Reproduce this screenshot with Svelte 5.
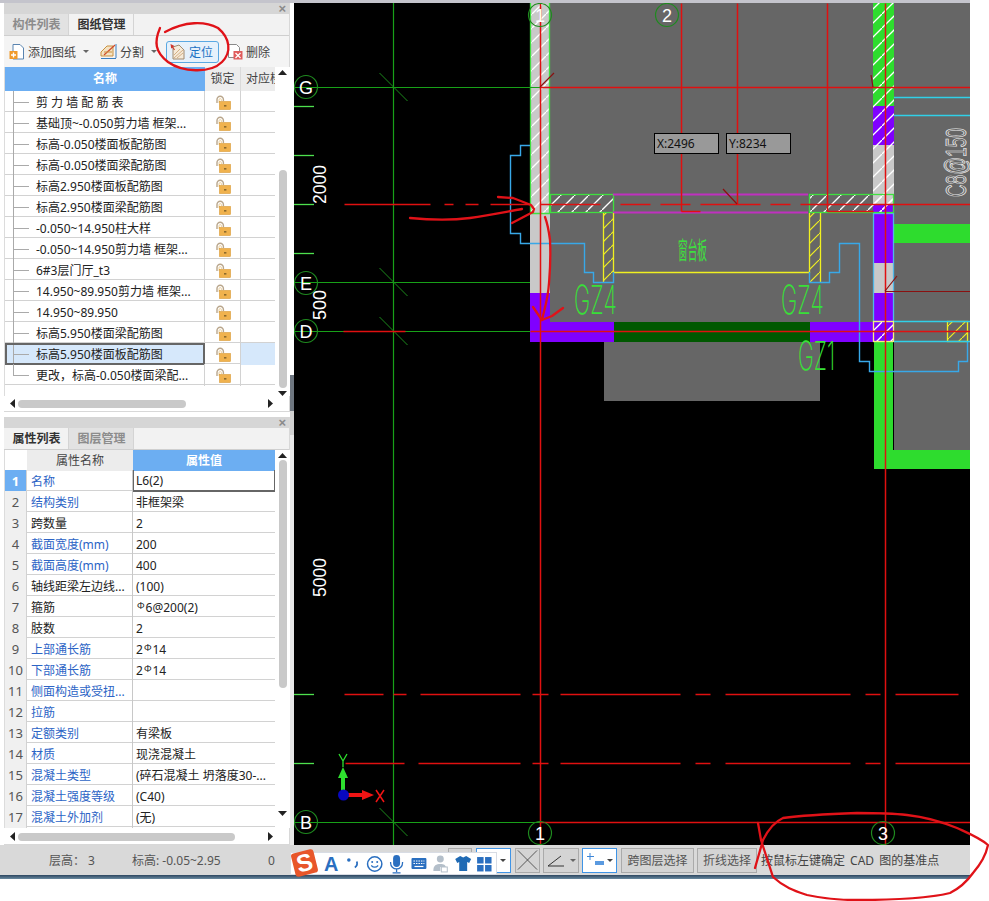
<script lang="ts">
  const drawings = [
    "剪 力 墙 配 筋 表",
    "基础顶~-0.050剪力墙 框架...",
    "标高-0.050楼面板配筋图",
    "标高-0.050楼面梁配筋图",
    "标高2.950楼面板配筋图",
    "标高2.950楼面梁配筋图",
    "-0.050~14.950柱大样",
    "-0.050~14.950剪力墙 框架...",
    "6#3层门厅_t3",
    "14.950~89.950剪力墙 框架...",
    "14.950~89.950",
    "标高5.950楼面梁配筋图",
    "标高5.950楼面板配筋图",
    "更改，标高-0.050楼面梁配...",
  ];
  const selectedDrawing = 12;

  // link = blue label, bar = rebar symbol goes between pre and post
  const props = [
    { name: "名称", value: "L6(2)", link: true },
    { name: "结构类别", value: "非框架梁", link: true },
    { name: "跨数量", value: "2" },
    { name: "截面宽度(mm)", value: "200", link: true },
    { name: "截面高度(mm)", value: "400", link: true },
    { name: "轴线距梁左边线...", value: "(100)" },
    { name: "箍筋", pre: "", post: "6@200(2)" },
    { name: "肢数", value: "2" },
    { name: "上部通长筋", pre: "2", post: "14", link: true },
    { name: "下部通长筋", pre: "2", post: "14", link: true },
    { name: "侧面构造或受扭...", value: "", link: true },
    { name: "拉筋", value: "", link: true },
    { name: "定额类别", value: "有梁板", link: true },
    { name: "材质", value: "现浇混凝土", link: true },
    { name: "混凝土类型", value: "(碎石混凝土 坍落度30-...", link: true },
    { name: "混凝土强度等级", value: "(C40)", link: true },
    { name: "混凝土外加剂", value: "(无)", link: true },
  ];

  const axes = [
    { t: "1", x: 540, y: 15 },
    { t: "2", x: 667, y: 15 },
    { t: "G", x: 306, y: 87 },
    { t: "E", x: 306, y: 283 },
    { t: "D", x: 306, y: 331 },
    { t: "B", x: 306, y: 822 },
    { t: "1", x: 540, y: 833 },
    { t: "3", x: 883, y: 833 },
  ];

  const crosses = [87, 282, 331, 822];
  const ticks = [106, 155, 204, 253, 694, 763];

  // red centre lines: [x1, y1, x2, y2]
  const redLines = [
    [540, 3, 540, 845],
    [885, 3, 885, 845],
    [681, 3, 681, 211],
    [737, 3, 737, 204],
    [827, 3, 827, 211],
    [540, 87, 970, 87],
    [681, 211, 700, 211],
    [827, 211, 873, 211],
    [344, 204, 430, 204],
    [444, 204, 453, 204],
    [465, 204, 478, 204],
    [490, 204, 530, 204],
    [540, 204, 600, 204],
    [620, 204, 650, 204],
    [660, 204, 690, 204],
    [700, 204, 760, 204],
    [770, 204, 790, 204],
    [800, 204, 970, 204],
    [343, 331, 405, 331],
    [530, 331, 970, 331],
    [344, 694, 383, 694],
    [393, 694, 406, 694],
    [420, 694, 520, 694],
    [532, 694, 548, 694],
    [560, 694, 680, 694],
    [695, 694, 710, 694],
    [725, 694, 850, 694],
    [865, 694, 880, 694],
    [895, 694, 958, 694],
    [345, 763, 404, 763],
    [418, 763, 520, 763],
    [532, 763, 548, 763],
    [560, 763, 680, 763],
    [695, 763, 710, 763],
    [725, 763, 850, 763],
    [865, 763, 880, 763],
    [895, 763, 970, 763],
    [540, 822, 970, 822],
  ];
</script>

{#snippet lock()}
  <svg class="lock" width="16" height="15" viewBox="0 0 16 15">
    <path d="M2 8V4.5a3.2 3.2 0 0 1 6.4 0V6" fill="none" stroke="#b9a68c" stroke-width="1.4" />
    <path d="M4 8V4.8a1.2 1.2 0 0 1 2.4 0V6" fill="none" stroke="#e8c78c" stroke-width="0.8" />
    <rect x="4.5" y="6.5" width="11" height="8" fill="#f0b24e" stroke="#d99a35" stroke-width="0.6" />
    <rect x="9" y="10" width="2.4" height="1.6" fill="#8c6a2c" />
  </svg>
{/snippet}

{#snippet rebar()}<span class="rebar">Φ</span>{/snippet}

{#snippet upArrow()}<svg width="9" height="5" viewBox="0 0 9 5"><path d="M4.5 0L9 5H0z" fill="#222" /></svg>{/snippet}
{#snippet downArrow()}<svg width="9" height="5" viewBox="0 0 9 5"><path d="M4.5 5L9 0H0z" fill="#222" /></svg>{/snippet}
{#snippet leftArrow()}<svg width="5" height="9" viewBox="0 0 5 9"><path d="M0 4.5L5 0V9z" fill="#222" /></svg>{/snippet}
{#snippet rightArrow()}<svg width="5" height="9" viewBox="0 0 5 9"><path d="M5 4.5L0 0V9z" fill="#222" /></svg>{/snippet}

<div class="page">
  <div class="topline"></div>
  <div class="main">
    <div class="side">
      <section class="panel first">
        <div class="panel-head"><span class="close">×</span></div>
        <div class="tabs">
          <span class="tab off">构件列表</span>
          <span class="tab on">图纸管理</span>
        </div>
        <div class="toolbar">
          <svg class="ti" style="margin-left:5px" width="16" height="18" viewBox="0 0 16 18">
            <path d="M4 1.5h7l3.5 3.5v11H4z" fill="#fff" stroke="#5a84b0" />
            <rect x="0.5" y="8" width="8" height="8" fill="#f09a2a" />
            <path d="M4.5 9.5v5M2 12h5" stroke="#fff" stroke-width="1.4" />
          </svg>
          <span class="tl" style="margin-left:3px">添加图纸</span>
          <span class="caret" style="margin-left:7px"></span>
          <svg class="ti" style="margin-left:11px" width="17" height="17" viewBox="0 0 17 17">
            <path d="M1 9l6-6h6v10H1z" fill="#f4e3c4" stroke="#c99140" />
            <path d="M1 15.5h15M16 1v14" stroke="#3b7fc0" />
            <path d="M4 12L15 2" stroke="#d04a2a" stroke-width="1.2" />
            <path d="M4 9h8" stroke="#c99140" />
          </svg>
          <span class="tl" style="margin-left:3px">分割</span>
          <span class="caret" style="margin-left:7px"></span>
          <span class="locate">
            <svg width="16" height="17" viewBox="0 0 16 17">
              <path d="M3 4l6-2 5 5v9H3z" fill="#f6ead8" stroke="#a08a70" />
              <path d="M4 15l9-8M7 15l6-5M4 12l6-6" stroke="#c9a070" stroke-width="0.8" />
              <path d="M0.5 1l4 2-1.5 1 2 2.5-1 .7L2.500 4.700 1.200 5.500z" fill="#d0352a" />
            </svg>
            定位
          </span>
          <svg class="ti" style="margin-left:8px" width="16" height="17" viewBox="0 0 16 17">
            <path d="M1.500 1.500h8l3 3v10h-11z" fill="#fff" stroke="#8a8a8a" />
            <rect x="6.500" y="8" width="9" height="8.500" fill="#e05c5c" />
            <path d="M8.500 10l5 5M13.500 10l-5 5" stroke="#fff" stroke-width="1.3" />
          </svg>
          <span class="tl" style="margin-left:3px">删除</span>
        </div>
        <div class="body first-body">
          <div class="grid-wrap">
            <div class="row1 head1">
              <span class="h-blue">名称</span>
              <span class="h-gray">锁定</span>
              <span class="h-gray clip">对应楼层</span>
            </div>
            {#each drawings as name, i}
              <div class="row1" class:sel={i === selectedDrawing}>
                <span class="c-name">
                  <span class="tree" class:last={i === drawings.length - 1}></span>
                  <span class="nm">{name}</span>
                </span>
                <span class="c-lock">{@render lock()}</span>
                <span class="c-last"></span>
              </div>
            {/each}
          </div>
          <div class="vbar">
            {@render upArrow()}
            <span class="vthumb one"></span>
            {@render downArrow()}
          </div>
        </div>
        <div class="hbar">
          {@render leftArrow()}
          <span class="hthumb one"></span>
          {@render rightArrow()}
        </div>
      </section>

      <section class="panel second">
        <div class="panel-head"><span class="close">×</span></div>
        <div class="tabs">
          <span class="tab on">属性列表</span>
          <span class="tab off">图层管理</span>
        </div>
        <div class="body second-body">
          <div class="grid-wrap">
            <div class="row2 head2">
              <span class="blank"></span>
              <span class="h-gray">属性名称</span>
              <span class="h-blue">属性值</span>
            </div>
            {#each props as p, i}
              <div class="row2" class:active={i === 0}>
                <span class="num">{i + 1}</span>
                <span class="label" class:link={p.link}>{p.name}</span>
                <span class="val">
                  {#if p.post}{p.pre}{@render rebar()}{p.post}{:else}{p.value}{/if}
                </span>
              </div>
            {/each}
          </div>
          <div class="vbar">
            {@render upArrow()}
            <span class="vthumb two"></span>
            <span class="vfill"></span>
            {@render downArrow()}
          </div>
        </div>
        <div class="hbar">
          {@render leftArrow()}
          <span class="hthumb two"></span>
          {@render rightArrow()}
        </div>
      </section>
    </div>

    <div class="splitter"></div>

    <svg class="canvas" width="676" height="842" viewBox="294 3 676 842">
      <defs>
        <pattern id="hatch" width="14" height="14" patternUnits="userSpaceOnUse">
          <path d="M-1 15L15 -1" stroke="#fff" stroke-width="1.300" />
        </pattern>
        <pattern id="hatch-y" width="13" height="13" patternUnits="userSpaceOnUse">
          <path d="M-1 14L14 -1" stroke="#f0f020" stroke-width="1.200" />
        </pattern>
      </defs>
      <rect x="294" y="3" width="676" height="842" fill="#000" />

      <!-- grey floor slabs -->
      <rect x="550" y="3" width="323" height="319" fill="#666" />
      <rect x="894" y="3" width="76" height="447" fill="#666" />
      <rect x="604" y="342" width="216" height="59" fill="#666" />

      <!-- left wall -->
      <rect x="530" y="3" width="20" height="290" fill="#c9c9c9" />
      <rect x="530" y="3" width="20" height="210" fill="url(#hatch)" />
      <rect x="530" y="293" width="20" height="49" fill="#8000ff" />
      <path d="M530.500 3V213.500H549.500V3" fill="none" stroke="#3fe03f" stroke-width="1.300" />

      <!-- bottom beam -->
      <rect x="530" y="322" width="84" height="20" fill="#8000ff" />
      <rect x="614" y="322" width="196" height="20" fill="#005800" />
      <rect x="810" y="322" width="63" height="20" fill="#8000ff" />

      <!-- right wall -->
      <rect x="873" y="3" width="21" height="103" fill="#2edc2e" />
      <rect x="873" y="106" width="21" height="39" fill="#8000ff" />
      <rect x="873" y="145" width="21" height="59" fill="#c9c9c9" />
      <rect x="873" y="204" width="21" height="59" fill="#8000ff" />
      <rect x="873" y="263" width="21" height="30" fill="#c9c9c9" />
      <rect x="873" y="293" width="21" height="49" fill="#8000ff" />
      <rect x="873" y="3" width="21" height="210" fill="url(#hatch)" />
      <rect x="874" y="342" width="19" height="127" fill="#2edc2e" />
      <rect x="874" y="450" width="96" height="19" fill="#2edc2e" />
      <rect x="894" y="224" width="76" height="19" fill="#2edc2e" />
      <rect x="873.500" y="213.500" width="20" height="108" fill="none" stroke="#4fb8e8" stroke-width="1.300" />
      <rect x="873.500" y="321.500" width="20" height="20" fill="url(#hatch)" />
      <rect x="873.500" y="321.500" width="20" height="20" fill="none" stroke="#f4f080" stroke-width="1.300" />

      <!-- hatched lintels -->
      <rect x="550.500" y="194.500" width="63" height="18" fill="url(#hatch)" stroke="#3fe03f" stroke-width="1.300" />
      <rect x="809.500" y="194.500" width="84" height="18" fill="url(#hatch)" stroke="#3fe03f" stroke-width="1.300" />
      <path d="M613 194.500H808M613 212.500H808" stroke="#c030c0" stroke-width="1.800" />

      <!-- yellow columns -->
      <path d="M603.500 213V282M613.500 213V272.500H809.500V213M820.500 213V282" fill="none" stroke="#f0f020" stroke-width="1.300" />
      <rect x="604" y="213" width="9" height="69" fill="url(#hatch-y)" />
      <rect x="810" y="213" width="10" height="69" fill="url(#hatch-y)" />
      <rect x="947.500" y="321.500" width="20" height="20" fill="url(#hatch-y)" stroke="#f0f020" stroke-width="1.300" />

      <!-- cyan outlines -->
      <path d="M530 145.500H520.500V155.500H510.500V233.500H520.500V243.500H584.500V272.500H593.500V282.500H613.500V272" fill="none" stroke="#38a8e8" stroke-width="1.400" />
      <path d="M809.500 272V282.500H829.500V272.500H839.500V243.500H859.500V361.500H869.500V371.500H958.500V361.500H967.500V342" fill="none" stroke="#38a8e8" stroke-width="1.400" />
      <path d="M894 97.500H970M894 115.500H970M894 321.500H970M894 341.500H970" stroke="#30d0e8" stroke-width="1.400" />

      <!-- green axis lines -->
      <path d="M393.500 3V845M294 87.500H540M294 282.500H530M294 331.500H530M294 822.500H540" stroke="#18a018" stroke-width="1.200" />
      {#each crosses as y}
        <path d="M379.500 {y - 14}L407.500 {y + 14}" stroke="#1c8a1c" />
      {/each}
      {#each ticks as y}
        <path d="M294 {y + 0.5}H314" stroke="#4ee04e" stroke-width="1.300" />
      {/each}

      <!-- red centre lines -->
      {#each redLines as [x1, y1, x2, y2]}
        <line x1={x1 + 0.5} y1={y1 + 0.5} x2={x2 + 0.5} y2={y2 + 0.5} stroke="#e01010" stroke-width="1.500" />
      {/each}
      <path d="M723 189L737 204M540 87L554 73M885 291.500H970M885 291L897 276M873 87L871 75" stroke="#8a1010" stroke-width="1.200" fill="none" />

      <!-- axis bubbles -->
      {#each axes as a}
        <circle cx={a.x} cy={a.y} r="11.500" fill="none" stroke="#1f8a1f" stroke-width="1.200" />
        <text class="axis" x={a.x} y={a.y + 6.500}>{a.t}</text>
      {/each}

      <!-- dimensions -->
      <text class="dim" transform="translate(326 204) rotate(-90)" textLength="39" lengthAdjust="spacingAndGlyphs">2000</text>
      <text class="dim" transform="translate(326 320) rotate(-90)" textLength="30" lengthAdjust="spacingAndGlyphs">500</text>
      <text class="dim" transform="translate(326 597) rotate(-90)" textLength="39" lengthAdjust="spacingAndGlyphs">5000</text>
      <text class="rebar-note" transform="translate(966 197) rotate(-90)" textLength="69" lengthAdjust="spacingAndGlyphs">C8@150</text>

      <!-- member labels -->
      <text class="member" x="574" y="314" textLength="43" lengthAdjust="spacingAndGlyphs">GZ4</text>
      <text class="member" x="781" y="314" textLength="43" lengthAdjust="spacingAndGlyphs">GZ4</text>
      <text class="member" x="798" y="370" textLength="37" lengthAdjust="spacingAndGlyphs">GZ1</text>
      <text class="sill" x="678" y="259" textLength="29" lengthAdjust="spacingAndGlyphs">窗台板</text>

      <!-- coordinate input boxes -->
      <rect x="654.500" y="133.500" width="64" height="20" fill="#999" stroke="#000" />
      <rect x="726.500" y="133.500" width="64" height="20" fill="#999" stroke="#000" />
      <text class="coord" x="657" y="148">X:2496</text>
      <text class="coord" x="729" y="148">Y:8234</text>

      <!-- ucs icon -->
      <path d="M343 795V776" stroke="#2ee02e" stroke-width="4" />
      <path d="M343 767l5 11h-10z" fill="#2ee02e" />
      <path d="M343 795H362" stroke="#f01414" stroke-width="4" />
      <path d="M374 795l-12-5v10z" fill="#f01414" />
      <circle cx="343.500" cy="795" r="5.500" fill="#0808c0" />
      <path d="M339 754l4 7 4-7M343 761v6" fill="none" stroke="#2ee02e" stroke-width="1.300" />
      <path d="M376 790l8 12M384 790l-8 12" stroke="#f01414" stroke-width="1.500" />
    </svg>
  </div>

  <div class="status">
    <span class="st-a">层高： 3</span>
    <span class="st-b">标高: -0.05~2.95</span>
    <span class="st-c">0</span>
    <span class="btn gray-stub"></span>
    <span class="btn blue wide"><span class="caret dark"></span></span>
    <span class="btn square">
      <svg width="24" height="22" viewBox="0 0 24 22"><path d="M2 1l20 20M22 1L2 21" stroke="#444" stroke-width="0.9" /></svg>
    </span>
    <span class="btn angle">
      <svg width="20" height="14" viewBox="0 0 20 14"><path d="M1 13H17M1 13L14 3" stroke="#333" /></svg>
      <span class="caret"></span>
    </span>
    <span class="btn blue plus">
      <svg width="18" height="14" viewBox="0 0 18 14"><path d="M3 0v7M0 3.500h7" stroke="#3c86d8" /><rect x="8" y="8" width="9" height="4" fill="#5a9ae0" /></svg>
      <span class="caret dark"></span>
    </span>
    <span class="btn txt w73">跨图层选择</span>
    <span class="btn txt w60">折线选择</span>
    <span class="msg">按鼠标左键确定 CAD 图的基准点</span>
  </div>
  <div class="bottomline"></div>

  <!-- sogou input method bar floats over the status bar -->
  <div class="ime">
    <span class="ime-logo"><b>S</b></span>
    <svg width="174" height="20" viewBox="0 0 174 20">
      <text x="1" y="17" class="ime-a">A</text>
      <circle cx="26" cy="6" r="1.800" fill="#2a6fc0" />
      <path d="M34 7.500c1 3-0.500 5-2 6" fill="none" stroke="#2a6fc0" stroke-width="1.800" />
      <circle cx="52" cy="10" r="7.200" fill="none" stroke="#2a6fc0" stroke-width="1.500" />
      <circle cx="49.500" cy="8" r="1" fill="#2a6fc0" />
      <circle cx="54.500" cy="8" r="1" fill="#2a6fc0" />
      <path d="M48.500 11.500q3.500 3.500 7 0" fill="none" stroke="#2a6fc0" stroke-width="1.200" />
      <rect x="70.500" y="1" width="7" height="12" rx="3.500" fill="#2a6fc0" />
      <path d="M68 8v1a6 6 0 0 0 12 0v-1M74 15v3M70 19h8" fill="none" stroke="#2a6fc0" stroke-width="1.300" />
      <rect x="89" y="4" width="15" height="11" rx="1" fill="#2a6fc0" />
      <path d="M91 7h11M91 9.500h11" stroke="#fff" stroke-dasharray="1.500 1" />
      <path d="M92 12.500h9" stroke="#fff" stroke-width="1.200" />
      <circle cx="118" cy="5" r="3.500" fill="#b4bfca" />
      <path d="M111 17c0-6 3-7 7-7s5 1 5.500 3H118v4z" fill="#b4bfca" />
      <rect x="119" y="13" width="6" height="5" fill="#fff" stroke="#b4bfca" />
      <path d="M133 5l5-3 3 1.500 3-1.500 5 3-2 4-2-1v9h-8V8l-2 1z" fill="#1f6ab4" />
      <rect x="155" y="3" width="6.500" height="6.500" fill="#2a6fc0" />
      <rect x="163" y="3" width="6.500" height="6.500" fill="#2a6fc0" />
      <rect x="155" y="11" width="6.500" height="6.500" fill="#2a6fc0" />
      <rect x="163" y="11" width="6.500" height="6.500" fill="#2a6fc0" />
    </svg>
  </div>

  <!-- red pen marks drawn on top of the screenshot -->
  <svg class="ink" width="989" height="901" viewBox="0 0 989 901">
    <g fill="none" stroke="#e01218" stroke-width="2.300" stroke-linecap="round" stroke-linejoin="round">
      <path d="M160 28C154 42 155 52 168 62C182 72 210 74 222 62C232 52 230 38 218 28C205 21 185 21 165 32" />
      <path d="M410 218C430 220 455 220 470 218C490 215 505 212 522 209" />
      <path d="M498 197L513 198L531 205L534 209L533 212L512 223" />
      <path d="M545 217C548 225 549 232 550 240C551 260 550 270 549 283C548 300 544 310 542 320" />
      <path d="M533 307L542 320L552 316L563 308" />
      <path d="M758 823L761 840L773 877C785 888 795 891 807 895C825 899 840 900 857 900C890 900 925 899 950 893C960 888 968 880 973 873C980 865 986 855 988 845C980 838 970 834 957 828C940 821 925 817 907 815C890 813 875 813 857 813C830 814 805 815 783 818C774 822 768 830 763 840L755 868" />
    </g>
  </svg>
</div>

<style>
  :global(body) { margin: 0; background: #fff; }
  .page { position: relative; width: 989px; height: 901px; background: #fff; font-family: "Noto Sans", "Noto Sans CJK SC", "Liberation Sans", sans-serif; font-size: 12px; color: #222; overflow: hidden; }
  .topline { height: 3px; width: 970px; background: #c4c4cc; }
  .main { display: flex; width: 970px; height: 842px; }
  .side { width: 290px; padding-left: 4px; box-sizing: border-box; display: flex; flex-direction: column; background: #fff; }
  .panel { display: flex; flex-direction: column; border-right: 1px solid #d8d8d8; }
  .panel.first { height: 409px; }
  .panel.second { height: 428px; margin-top: 5px; }
  .panel-head { height: 11px; background: #d6d6d6; display: flex; justify-content: flex-end; align-items: center; padding-right: 3px; }
  .close { color: #8a8a8a; font-size: 13px; line-height: 11px; font-family: "Liberation Sans", sans-serif; font-weight: 700; }
  .tabs { height: 22px; display: flex; background: #f2f2f2; border-bottom: 1px solid #cfcfcf; box-sizing: border-box; }
  .tab { width: 65px; padding-left: 1px; text-align: center; line-height: 21px; font-weight: 700; border-right: 1px solid #d4d4d4; box-sizing: border-box; }
  .tab.on { background: #f2f2f2; color: #333; }
  .tab.off { background: #e2e2e2; color: #8c8c8c; }

  .toolbar { height: 31px; display: flex; align-items: center; background: #f4f4f4; color: #444; }
  .ti { flex: none; }
  .tl { white-space: nowrap; }
  .caret { display: inline-block; width: 0; height: 0; border-left: 3px solid transparent; border-right: 3px solid transparent; border-top: 3px solid #666; }
  .caret.dark { border-top-color: #444; }
  .locate { display: flex; align-items: center; gap: 3px; width: 53px; height: 22px; margin-left: 9px; padding-left: 3px; box-sizing: border-box; background: #e6f1fb; border: 1px solid #5aa8e2; border-radius: 3px; color: #1c72c4; white-space: nowrap; }

  .body { display: flex; }
  .first-body { height: 329px; }
  .second-body { height: 378px; }
  .grid-wrap { width: 271px; flex: none; border-left: 1px solid #dcdcdc; box-sizing: border-box; }

  .row1 { display: grid; grid-template-columns: 200px 36px 34px; height: 21px; box-sizing: border-box; border-bottom: 1px solid #d2d2d2; background: #fff; }
  .head1 { height: 24px; border-bottom: 0; line-height: 24px; }
  .h-blue { background: #6caef2; color: #fff; font-weight: 700; text-align: center; }
  .h-gray { background: #ececec; color: #444; text-align: center; border-right: 1px solid #dadada; }
  .clip { overflow: hidden; white-space: nowrap; text-align: left; padding-left: 5px; border-right: 0; }
  .c-name { display: flex; align-items: stretch; border-right: 1px solid #d2d2d2; min-width: 0; }
  .tree { width: 17px; margin-left: 8px; flex: none; background: linear-gradient(#aaa, #aaa) 0 0 / 1px 100% no-repeat, linear-gradient(#aaa, #aaa) 0 50% / 16px 1px no-repeat; }
  .tree.last { background: linear-gradient(#aaa, #aaa) 0 0 / 1px 50% no-repeat, linear-gradient(#aaa, #aaa) 0 50% / 16px 1px no-repeat; }
  .nm { margin-left: 6px; padding-top: 1px; line-height: 21px; white-space: nowrap; color: #222; }
  .c-lock { display: flex; align-items: center; justify-content: center; border-right: 1px solid #d2d2d2; }
  .lock { display: block; }
  .row1.sel .c-name { background: #d6e8fb; outline: 2px solid #666; outline-offset: -2px; }
  .row1.sel .c-last { background: #d6e8fb; }

  .vbar { width: 15px; flex: none; display: flex; flex-direction: column; align-items: center; padding-top: 3px; box-sizing: border-box; background: #fff; }
  .vthumb { width: 8px; border-radius: 4px; background: #c9c9c9; flex: none; }
  .vthumb.one { height: 218px; margin-top: 95px; margin-bottom: 3px; }
  .vthumb.two { height: 228px; margin-top: 2px; }
  .vfill { flex: 1; }
  .second-body .vbar svg:last-child { margin-bottom: 12px; }

  .hbar { height: 16px; display: flex; align-items: center; padding: 0 16px 0 6px; background: #fff; border-bottom: 1px solid #d8d8d8; margin-top: auto; box-sizing: border-box; }
  .hthumb { height: 8px; border-radius: 4px; background: #c9c9c9; margin-left: 3px; }
  .hthumb.one { width: 168px; margin-right: auto; }
  .hthumb.two { width: 217px; margin-right: auto; }

  .row2 { display: grid; grid-template-columns: 22px 106px 142px; height: 21px; box-sizing: border-box; border-bottom: 1px solid #d2d2d2; line-height: 21px; white-space: nowrap; }
  .row2 > span { padding-top: 1px; box-sizing: border-box; }
  .head2 { height: 20px; border-bottom: 0; line-height: 20px; }
  .blank { background: #fff; }
  .head2 .h-gray { border-right: 0; }
  .num { background: #f0f0f0; color: #555; text-align: center; border-right: 1px solid #d2d2d2; font-size: 13px; }
  .label { padding-left: 4px; overflow: hidden; border-right: 1px solid #c8c8c8; color: #222; }
  .label.link { color: #2c64c6; }
  .val { padding-left: 3px; color: #222; overflow: hidden; }
  .row2.active .num { background: #6caef2; color: #fff; font-weight: 700; }
  .row2.active .val { border: 1px solid #666; border-width: 0 1px 2px 1px; line-height: 20px; padding-left: 2px; }
  .rebar { font-size: 9px; position: relative; top: -3px; margin: 0 1px; }

  .splitter { width: 4px; flex: none; background: linear-gradient(#fff 0, #fff 372px, #6e7680 372px, #6e7680 408px, #d0d0d0 408px, #d0d0d0 432px, #e8e8e8 432px); }
  .canvas { display: block; flex: none; }
  .axis { fill: #fff; font-family: "Liberation Sans", sans-serif; font-size: 18px; text-anchor: middle; }
  .dim { fill: #fff; font-family: "Liberation Sans", sans-serif; font-size: 18px; }
  .rebar-note { fill: none; stroke: #f0f0f0; stroke-width: 0.8; font-family: "Liberation Sans", sans-serif; font-size: 30px; }
  .member { fill: #38e038; font-family: Inter, "Liberation Sans", sans-serif; font-weight: 200; font-size: 40px; }
  .sill { fill: #3ee03e; font-family: "Noto Sans CJK SC", sans-serif; font-size: 24px; }
  .coord { fill: #111; font-family: "Noto Sans", sans-serif; font-size: 12px; }

  .status { height: 30px; width: 970px; background: #d9d9d9; display: flex; align-items: center; color: #555; white-space: nowrap; box-sizing: border-box; }
  .st-a { margin-left: 49px; width: 83px; flex: none; }
  .st-b { width: 136px; flex: none; }
  .st-c { width: 180px; flex: none; }
  .btn { display: flex; align-items: center; justify-content: center; box-sizing: border-box; height: 25px; background: #d4d4d4; border: 1px solid #aaa; flex: none; }
  .gray-stub { width: 24px; height: 25px; margin-right: 4px; }
  .blue { background: #fff; border: 1px solid #3f94e6; }
  .wide { width: 35px; justify-content: flex-end; padding-right: 4px; }
  .square { width: 25px; margin-left: 4px; }
  .angle { width: 36px; margin-left: 3px; gap: 3px; }
  .plus { width: 35px; margin-left: 3px; gap: 2px; }
  .txt { color: #555; }
  .w73 { width: 73px; margin-left: 4px; }
  .w60 { width: 60px; margin-left: 3px; }
  .msg { margin-left: 4px; color: #444; word-spacing: 2px; }
  .bottomline { height: 4px; width: 970px; background: linear-gradient(#2c4660, #6a8aa0); }

  .ime { position: absolute; left: 290px; top: 852px; width: 207px; height: 23px; background: #fff; border: 1px solid #d8dce4; box-sizing: border-box; display: flex; align-items: center; padding-left: 32px; }
  .ime-logo { position: absolute; left: 2px; top: -2px; width: 23px; height: 24px; background: #e8562a; border-radius: 3px; transform: rotate(-14deg); display: flex; align-items: center; justify-content: center; color: #fff; font: 700 24px "Liberation Sans", sans-serif; }
  .ime-logo b { font-weight: 700; }
  .ime-a { fill: #2a6fc0; font: 700 20px "Liberation Sans", sans-serif; }
  .ink { position: absolute; left: 0; top: 0; pointer-events: none; }
</style>
